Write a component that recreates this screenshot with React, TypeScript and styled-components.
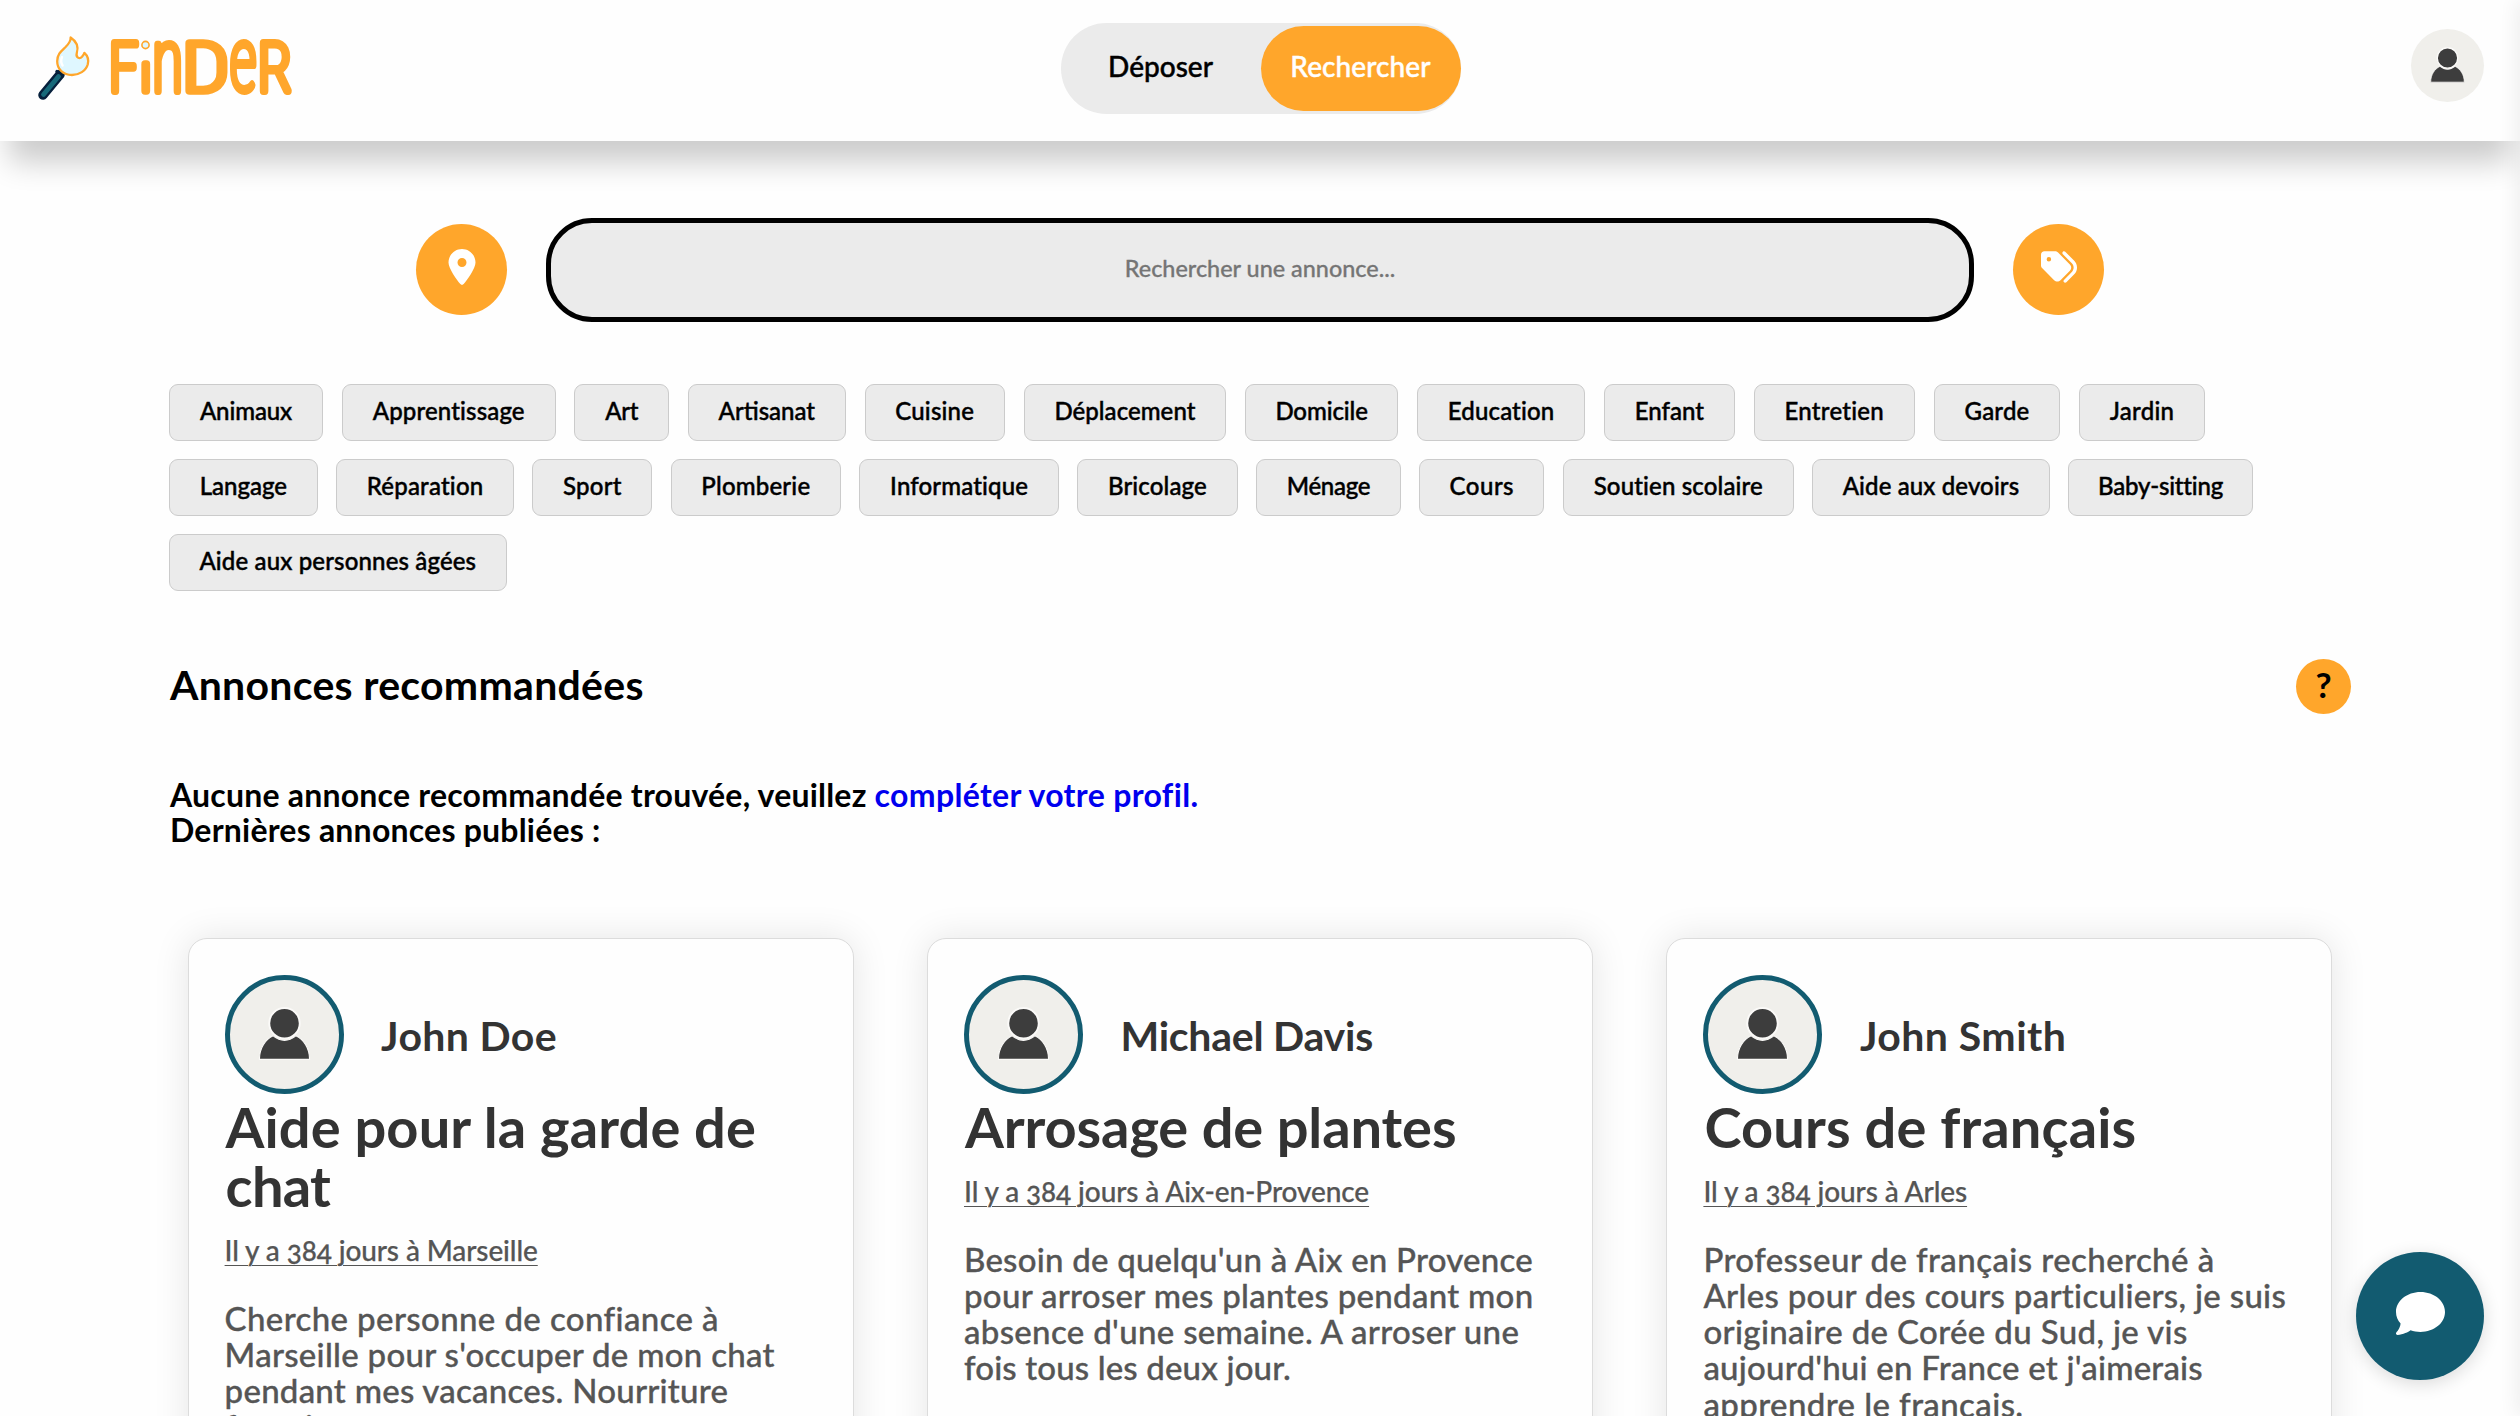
import React from 'react';
import styled, { createGlobalStyle } from 'styled-components';
import { FaComment, FaLocationDot, FaTags } from 'react-icons/fa6';

const GlobalStyle = createGlobalStyle`
  *, *::before, *::after { box-sizing: border-box; }
  html, body { height: 100%; overflow: hidden; }
  body {
    margin: 0;
    background: #fefefe;
    color: #000;
    font-family: Lato, "Open Sans", sans-serif;
    font-weight: 500;
  }
`;

const Page = styled.div`
  height: 1416px;
  overflow: hidden;
  display: flex;
  flex-direction: column;
`;

/* ---------- Header ---------- */

const Header = styled.header`
  position: relative;
  z-index: 2;
  flex: none;
  height: 141px;
  display: grid;
  grid-template-columns: 1fr 400px 1fr;
  align-items: start;
  padding: 0 36px 0 37px;
  background: #fefefe;
  box-shadow: 0 30px 28px -9px rgba(0, 0, 0, 0.2);
`;

const Brand = styled.a`
  display: block;
  margin-top: 22px;
  width: 270px;
  height: 90px;
`;

const Toggle = styled.nav`
  margin-top: 23px;
  height: 91px;
  display: flex;
  align-items: center;
  border-radius: 46px;
  background: #ebebeb;
`;

const ToggleItem = styled.a<{ $active?: boolean }>`
  flex: 1;
  height: 85px;
  padding-bottom: 6px;
  display: flex;
  align-items: center;
  justify-content: center;
  border-radius: 43px;
  font-size: 28px;
  letter-spacing: ${p => (p.$active ? '0.1px' : '0')};
  color: ${p => (p.$active ? '#fff' : '#000')};
  background: ${p => (p.$active ? '#ffa62b' : 'transparent')};
  -webkit-text-stroke: 0.45px;
`;

const Avatar = styled.span<{ $size: number; $ring?: boolean }>`
  flex: none;
  display: block;
  width: ${p => p.$size}px;
  height: ${p => p.$size}px;
  overflow: hidden;
  border-radius: 50%;
  border: ${p => (p.$ring ? '5px solid #125b70' : '0')};
  background: #f0efeb;

  svg { display: block; width: 100%; height: 100%; }
`;

const HeaderAvatar = styled(Avatar)`
  justify-self: end;
  margin-top: 29px;
`;

const EdgeShadow = styled.div`
  position: fixed;
  z-index: 3;
  top: 0;
  bottom: 0;
  right: -10px;
  width: 10px;
  box-shadow: 0 0 20px rgba(0, 0, 0, 0.12);
`;

/* ---------- Search ---------- */

const SearchRow = styled.form`
  flex: none;
  display: flex;
  align-items: center;
  justify-content: center;
  gap: 39px;
  margin-top: 77px;
`;

const RoundButton = styled.button`
  width: 91px;
  height: 91px;
  margin-bottom: 2px;
  padding: 0 0 4px;
  display: flex;
  align-items: center;
  justify-content: center;
  border: 0;
  border-radius: 50%;
  background: #ffa62b;
  color: #fff;
`;

const SearchInput = styled.input`
  width: 1428px;
  height: 104px;
  padding: 0 40px 5px;
  border: 5px solid #000;
  border-radius: 46px;
  background: #ebebeb;
  text-align: center;
  font: 500 23.4px Lato, sans-serif;

  &::placeholder {
    color: #757575;
    opacity: 1;
    -webkit-text-stroke: 0.3px;
  }
`;

/* ---------- Main column ---------- */

const Main = styled.main`
  width: 2182px;
  margin: 62px 0 0 169px;
`;

const TagList = styled.div`
  display: flex;
  flex-direction: column;
  gap: 18px;
`;

const TagRow = styled.div<{ $gap: number }>`
  display: flex;
  gap: ${p => p.$gap}px;
`;

const Tag = styled.button<{ $width: number; $tracking: number }>`
  flex: none;
  width: ${p => p.$width}px;
  height: 57px;
  padding: 0 0 4px;
  border: 1px solid #cbcbcb;
  border-radius: 9px;
  background: #ebebeb;
  color: #000;
  font: 500 24px Lato, sans-serif;
  letter-spacing: ${p => p.$tracking}px;
  white-space: nowrap;
  -webkit-text-stroke: 0.45px;
`;

const SectionHead = styled.div`
  display: flex;
  align-items: center;
  justify-content: space-between;
  height: 55px;
  margin-top: 68px;
`;

const SectionTitle = styled.h2`
  margin: 0 0 4px 1px;
  font-size: 41px;
  line-height: 48px;
  font-weight: 700;
  letter-spacing: 0.28px;
`;

const HelpButton = styled.button`
  width: 55px;
  height: 55px;
  padding: 0 0 5px;
  border: 0;
  border-radius: 50%;
  background: #ffa62b;
  color: #000;
  font: 700 35px Lato, sans-serif;
`;

const Notice = styled.p`
  margin: 62.5px 0 0 1px;
  font-size: 32px;
  line-height: 35.4px;
  font-weight: 700;
  letter-spacing: 0.21px;
`;

const ProfileLink = styled.a`
  color: #0000ee;
  letter-spacing: 0.34px;
`;

const CardGrid = styled.section`
  display: grid;
  grid-template-columns: repeat(3, 666px);
  column-gap: 73.4px;
  margin: 90.5px 0 0 18.6px;
`;

const Card = styled.article`
  height: 620px;
  padding: 36px;
  border: 1px solid #dcdcdc;
  border-radius: 19px;
  background: #fefefe;
  box-shadow: 0 0 36px rgba(0, 0, 0, 0.1);
`;

const Author = styled.div`
  display: flex;
  align-items: center;
  gap: 37.5px;
`;

const AuthorName = styled.span<{ $tracking: number }>`
  margin-top: 3px;
  font-size: 41px;
  line-height: 48px;
  font-weight: 700;
  color: #333;
  letter-spacing: ${p => p.$tracking}px;
`;

const CardTitle = styled.h3`
  margin: 3px 0 0 1px;
  font-size: 56px;
  line-height: 59px;
  font-weight: 700;
  color: #333;
`;

const Line = styled.span<{ $tracking: number }>`
  display: block;
  white-space: nowrap;
  letter-spacing: ${p => p.$tracking}px;
`;

const Meta = styled.div`
  margin-top: 18px;
  font-size: 28px;
  line-height: 34px;
  color: #555;
  font-variant-numeric: oldstyle-nums;
  letter-spacing: -0.1px;
  text-decoration: underline;
  text-decoration-thickness: 1px;
  text-underline-offset: 4px;
  -webkit-text-stroke: 0.25px;
`;

const Description = styled.p`
  margin: 33px 0 0;
  font-size: 33px;
  line-height: 36.2px;
  color: #555;
  -webkit-text-stroke: 0.35px;
`;

const ChatButton = styled.button`
  position: fixed;
  z-index: 4;
  right: 36px;
  bottom: 36px;
  width: 128px;
  height: 128px;
  padding: 0 0 5px;
  display: flex;
  align-items: center;
  justify-content: center;
  border: 0;
  border-radius: 50%;
  background: #125b70;
  color: #fff;
  box-shadow: 0 4px 18px rgba(0, 0, 0, 0.14);
`;

/* ---------- Drawings ---------- */

const Glyph = styled.text<{ $size: number; $stroke?: number }>`
  font-family: Roboto, sans-serif;
  font-weight: 100;
  font-stretch: 75%;
  font-size: ${p => p.$size}px;
  fill: #ffa62b;
  stroke: #ffa62b;
  stroke-width: ${p => p.$stroke ?? 7.8}px;
  stroke-linejoin: round;
`;

const Logo = () => (
  <svg width="270" height="90" viewBox="37 22 270 90" role="img" aria-label="FinDeR">
    <path d="M60 74.5 43 95" stroke="#06203c" strokeWidth="9.5" strokeLinecap="round" />
    <path d="M57 71.5 62.5 76" stroke="#06203c" strokeWidth="3.5" strokeLinecap="round" />
    <path d="M58.5 76.5 43.5 94.5" stroke="#17697a" strokeWidth="4.8" strokeLinecap="round" />
    <path
      d="M70.6 37.5C76 41 79 46 76.8 53C75.5 57.5 79.5 59.5 82 56.8C83.5 55 84.2 54 84.4 52.8C88 56 88.8 60 87.8 64.2C86 71 79 75 72 75C63 75 57.2 69 57.2 61.2C57.2 54 61.5 51 65.8 46.8C69.5 43 71 41 70.6 37.5Z"
      fill="#dff7ff"
      stroke="#ffa62b"
      strokeWidth="2.3"
      strokeLinejoin="round"
    />
    <path d="M62 57C60.8 60 61 63 62.6 65.5" fill="none" stroke="#fff" strokeWidth="2.4" strokeLinecap="round" />
    <Glyph $size={66.3} transform="translate(109.1 91.2) scale(.87 1)">F</Glyph>
    <Glyph $size={52} $stroke={7.4} transform="translate(140.7 91.3)">ı</Glyph>
    <circle cx="145.5" cy="45" r="3.6" fill="#dff7ff" stroke="#ffa62b" strokeWidth="1.6" />
    <Glyph $size={87.5} transform="translate(152 91.2) scale(.74 1)">n</Glyph>
    <Glyph $size={66.3} $stroke={7.4} transform="translate(182.4 91.3) scale(1.21 1)">D</Glyph>
    <Glyph $size={86.5} transform="translate(230 90.4) scale(.68 1)">e</Glyph>
    <Glyph $size={66.3} transform="translate(258.1 91.2) scale(.9 1)">R</Glyph>
  </svg>
);

const Person = () => (
  <svg viewBox="0 0 100 100">
    <path
      d="M27 72.8C27 62.5 32.5 54.5 39.6 51.2Q50 59.5 60.4 51.2C67.5 54.5 73 62.5 73 72.8Z"
      fill="#3d3d3d"
      stroke="#fbfaf8"
      strokeWidth="1"
    />
    <circle cx="50" cy="39.7" r="14" fill="#3d3d3d" stroke="#fbfaf8" strokeWidth="1.8" />
  </svg>
);

/* ---------- Content ---------- */

type Span = [text: string, tracking: number];
type TagItem = [label: string, width: number, tracking: number];

const tagRows: { gap: number; items: TagItem[] }[] = [
  {
    gap: 18.9,
    items: [
      ['Animaux', 154, -0.1], ['Apprentissage', 213.7, 0.15], ['Art', 94.6, -0.2], ['Artisanat', 157.7, 0],
      ['Cuisine', 140.3, 0.2], ['Déplacement', 202.4, 0.05], ['Domicile', 153.2, -0.1], ['Education', 168, 0.15],
      ['Enfant', 130.8, 0], ['Entretien', 161.2, 0.25], ['Garde', 126.5, 0.2], ['Jardin', 125.8, 0.3],
    ],
  },
  {
    gap: 18.5,
    items: [
      ['Langage', 148.7, 0], ['Réparation', 177.8, 0.2], ['Sport', 119.7, 0.2], ['Plomberie', 170.3, 0.2],
      ['Informatique', 199.3, 0.15], ['Bricolage', 160.4, 0.15], ['Ménage', 144.5, -0.3], ['Cours', 125.3, 0.5],
      ['Soutien scolaire', 230.7, 0.15], ['Aide aux devoirs', 237.7, 0.12], ['Baby-sitting', 184.4, -0.2],
    ],
  },
  { gap: 18.5, items: [['Aide aux personnes âgées', 337.6, 0.15]] },
];

const ads: { name: Span; title: Span[]; meta: string; text: Span[] }[] = [
  {
    name: ['John Doe', 0.35],
    title: [['Aide pour la garde de', 0.1], ['chat', -0.7]],
    meta: 'Il y a 384 jours à Marseille',
    text: [
      ['Cherche personne de confiance à', 0.38],
      ["Marseille pour s'occuper de mon chat", 0.28],
      ['pendant mes vacances. Nourriture', 0.25],
      ['fournie.', 0.28],
    ],
  },
  {
    name: ['Michael Davis', -0.25],
    title: [['Arrosage de plantes', -0.1]],
    meta: 'Il y a 384 jours à Aix-en-Provence',
    text: [
      ["Besoin de quelqu'un à Aix en Provence", 0.22],
      ['pour arroser mes plantes pendant mon', 0.29],
      ["absence d'une semaine. A arroser une", 0.32],
      ['fois tous les deux jour.', 0.14],
    ],
  },
  {
    name: ['John Smith', 0.45],
    title: [['Cours de français', 0.15]],
    meta: 'Il y a 384 jours à Arles',
    text: [
      ['Professeur de français recherché à', 0.42],
      ['Arles pour des cours particuliers, je suis', 0.3],
      ['originaire de Corée du Sud, je vis', 0.35],
      ["aujourd'hui en France et j'aimerais", 0.22],
      ['apprendre le français.', 0.4],
    ],
  },
];

const Lines = ({ items }: { items: Span[] }) => (
  <>
    {items.map(([text, tracking]) => (
      <Line key={text} $tracking={tracking}>{text}</Line>
    ))}
  </>
);

export default function App() {
  return (
    <Page>
      <GlobalStyle />
      <Header>
        <Brand><Logo /></Brand>
        <Toggle>
          <ToggleItem>Déposer</ToggleItem>
          <ToggleItem $active>Rechercher</ToggleItem>
        </Toggle>
        <HeaderAvatar $size={73}><Person /></HeaderAvatar>
      </Header>

      <SearchRow>
        <RoundButton type="button" aria-label="Localisation"><FaLocationDot size={36} /></RoundButton>
        <SearchInput placeholder="Rechercher une annonce..." />
        <RoundButton type="button" aria-label="Catégories"><FaTags size={36} /></RoundButton>
      </SearchRow>

      <Main>
        <TagList>
          {tagRows.map(row => (
            <TagRow key={row.items[0][0]} $gap={row.gap}>
              {row.items.map(([label, width, tracking]) => (
                <Tag key={label} $width={width} $tracking={tracking}>{label}</Tag>
              ))}
            </TagRow>
          ))}
        </TagList>

        <SectionHead>
          <SectionTitle>Annonces recommandées</SectionTitle>
          <HelpButton>?</HelpButton>
        </SectionHead>

        <Notice>
          Aucune annonce recommandée trouvée, veuillez <ProfileLink>compléter votre profil.</ProfileLink>
          <br />
          Dernières annonces publiées :
        </Notice>

        <CardGrid>
          {ads.map(ad => (
            <Card key={ad.meta}>
              <Author>
                <Avatar $size={119} $ring><Person /></Avatar>
                <AuthorName $tracking={ad.name[1]}>{ad.name[0]}</AuthorName>
              </Author>
              <CardTitle><Lines items={ad.title} /></CardTitle>
              <Meta>{ad.meta}</Meta>
              <Description><Lines items={ad.text} /></Description>
            </Card>
          ))}
        </CardGrid>
      </Main>

      <EdgeShadow />
      <ChatButton aria-label="Messages"><FaComment size={49} /></ChatButton>
    </Page>
  );
}
